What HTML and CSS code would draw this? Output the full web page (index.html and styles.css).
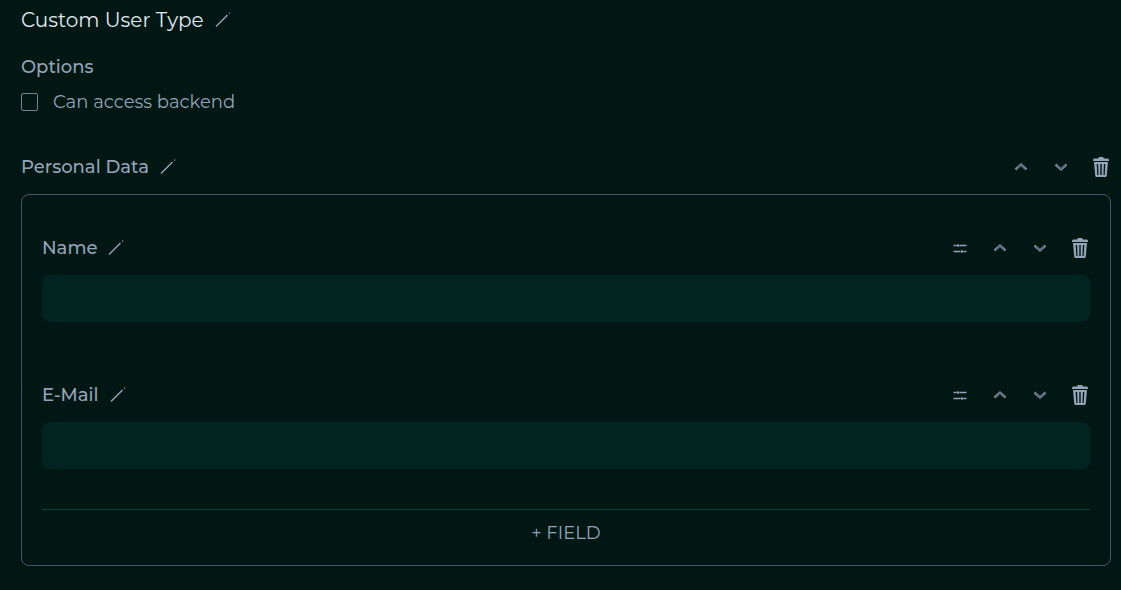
FILE: index.html
```html
<!DOCTYPE html>
<html lang="en">
<head>
<meta charset="utf-8">
<title>Custom User Type</title>
<link rel="stylesheet" href="styles.css">
</head>
<body>
<svg class="sprite" aria-hidden="true">
  <symbol id="pencil" viewBox="0 0 16 16"><path d="M1 14.500 12.500 3" fill="none" stroke="currentColor" stroke-width="1.500"/><path d="M14 .5h1.200v1.200H14z"/></symbol>
  <symbol id="up" viewBox="0 0 20 20"><path d="M4.500 12.500 10 7.500l5.500 5" fill="none" stroke="#7d8b9f" stroke-width="2.400"/><path d="M5.500 12 10 7.900l4.500 4.100" fill="none" stroke="#475569" stroke-width="1"/></symbol>
  <symbol id="down" viewBox="0 0 20 20"><path d="M4.500 7.500l5.500 5 5.500-5" fill="none" stroke="#7d8b9f" stroke-width="2.400"/><path d="M5.500 8 10 12.100 14.500 8" fill="none" stroke="#475569" stroke-width="1"/></symbol>
  <symbol id="trash" viewBox="0 0 20 20"><path d="M8 0h4l1 1.500h4q1 .3 1 2V4H2v-.5q0-1.700 1-2h4z"/><path fill-rule="evenodd" d="M3 5h14l-1.200 13.500q-.2 1.500-1.500 1.500H5.700q-1.300 0-1.500-1.500zM5.700 7l.6 11h1.200L7.100 7zM9.300 7v11h1.400V7zM12.900 7l-.4 11h1.200l.6-11z"/></symbol>
  <symbol id="sliders" viewBox="0 0 20 20"><path d="M3.500 7.500h3M9.500 7.500H16.500M3.500 13.500h7M13.500 13.500h3" fill="none" stroke="currentColor" stroke-width="1.300"/><circle cx="8" cy="7.500" r="1.300"/><circle cx="12" cy="13.500" r="1.300"/></symbol>
</svg>
<main class="editor">
  <header class="row title-row">
    <h1 class="title">Custom User Type</h1>
    <button class="icon-button edit" type="button" aria-label="Rename user type"><svg><use href="#pencil"/></svg></button>
  </header>
  <section class="options">
    <h2 class="label">Options</h2>
    <label class="check"><input class="checkbox" type="checkbox">Can access backend</label>
  </section>
  <section class="group">
    <header class="row">
      <h2 class="label">Personal Data</h2>
      <button class="icon-button edit" type="button" aria-label="Rename group"><svg><use href="#pencil"/></svg></button>
      <div class="actions">
        <button class="icon-button" type="button" aria-label="Move group up"><svg><use href="#up"/></svg></button>
        <button class="icon-button" type="button" aria-label="Move group down"><svg><use href="#down"/></svg></button>
        <button class="icon-button" type="button" aria-label="Delete group"><svg><use href="#trash"/></svg></button>
      </div>
    </header>
    <div class="panel">
      <div class="field">
        <div class="row">
          <label class="label" for="name">Name</label>
          <button class="icon-button edit" type="button" aria-label="Rename field"><svg><use href="#pencil"/></svg></button>
          <div class="actions">
            <button class="icon-button" type="button" aria-label="Field settings"><svg><use href="#sliders"/></svg></button>
            <button class="icon-button" type="button" aria-label="Move field up"><svg><use href="#up"/></svg></button>
            <button class="icon-button" type="button" aria-label="Move field down"><svg><use href="#down"/></svg></button>
            <button class="icon-button" type="button" aria-label="Delete field"><svg><use href="#trash"/></svg></button>
          </div>
        </div>
        <input class="text-input" id="name" type="text">
      </div>
      <div class="field">
        <div class="row">
          <label class="label" for="email">E-Mail</label>
          <button class="icon-button edit" type="button" aria-label="Rename field"><svg><use href="#pencil"/></svg></button>
          <div class="actions">
            <button class="icon-button" type="button" aria-label="Field settings"><svg><use href="#sliders"/></svg></button>
            <button class="icon-button" type="button" aria-label="Move field up"><svg><use href="#up"/></svg></button>
            <button class="icon-button" type="button" aria-label="Move field down"><svg><use href="#down"/></svg></button>
            <button class="icon-button" type="button" aria-label="Delete field"><svg><use href="#trash"/></svg></button>
          </div>
        </div>
        <input class="text-input" id="email" type="email">
      </div>
      <button class="add-field" type="button">+ FIELD</button>
    </div>
  </section>
</main>
</body>
</html>
```
FILE: styles.css
```css
* { box-sizing: border-box; }

body {
  margin: 0;
  background: #001713;
  color: #94a3b8;
  font: 18px/24px Montserrat, Inter, sans-serif;
}

button, input { font: inherit; color: inherit; }

.sprite {
  position: absolute;
  width: 0;
  height: 0;
}

.editor { padding: 0 10px 24px 21px; }

.row {
  display: flex;
  align-items: center;
  gap: 11px;
  height: 40px;
}

.title {
  margin: 0;
  color: #e2e8f0;
  font-size: 20px;
  font-weight: 400;
}

.label {
  margin: 0;
  font-size: 18px;
  font-weight: 500;
}

.icon-button {
  display: block;
  width: 20px;
  height: 20px;
  padding: 0;
  border: 0;
  background: none;
  cursor: pointer;
}

.icon-button svg {
  display: block;
  width: 100%;
  height: 100%;
  fill: currentColor;
}

.edit {
  width: 16px;
  height: 16px;
}

.actions {
  display: flex;
  gap: 20px;
  margin-left: auto;
}

.options {
  display: grid;
  gap: 11px;
  padding: 15px 0 33px;
}

.check {
  display: flex;
  align-items: center;
  gap: 15px;
}

.checkbox {
  appearance: none;
  width: 17px;
  height: 18px;
  margin: 0;
  border: 1px solid #718399;
  border-radius: 2px;
}

.checkbox:checked { background: #94a3b8; }

.panel {
  margin-top: 7px;
  padding: 33px 20px 9px;
  border: 1px solid #475569;
  border-radius: 8px;
}

.field + .field { margin-top: 53px; }

.text-input {
  display: block;
  width: 100%;
  height: 47px;
  margin-top: 7px;
  padding: 0 12px;
  border: 0;
  border-radius: 8px;
  background: #002420;
}

.add-field {
  display: block;
  width: 100%;
  height: 47px;
  margin-top: 40px;
  padding: 0;
  border: 0;
  border-top: 1px solid #0b443d;
  background: none;
  cursor: pointer;
}
```
